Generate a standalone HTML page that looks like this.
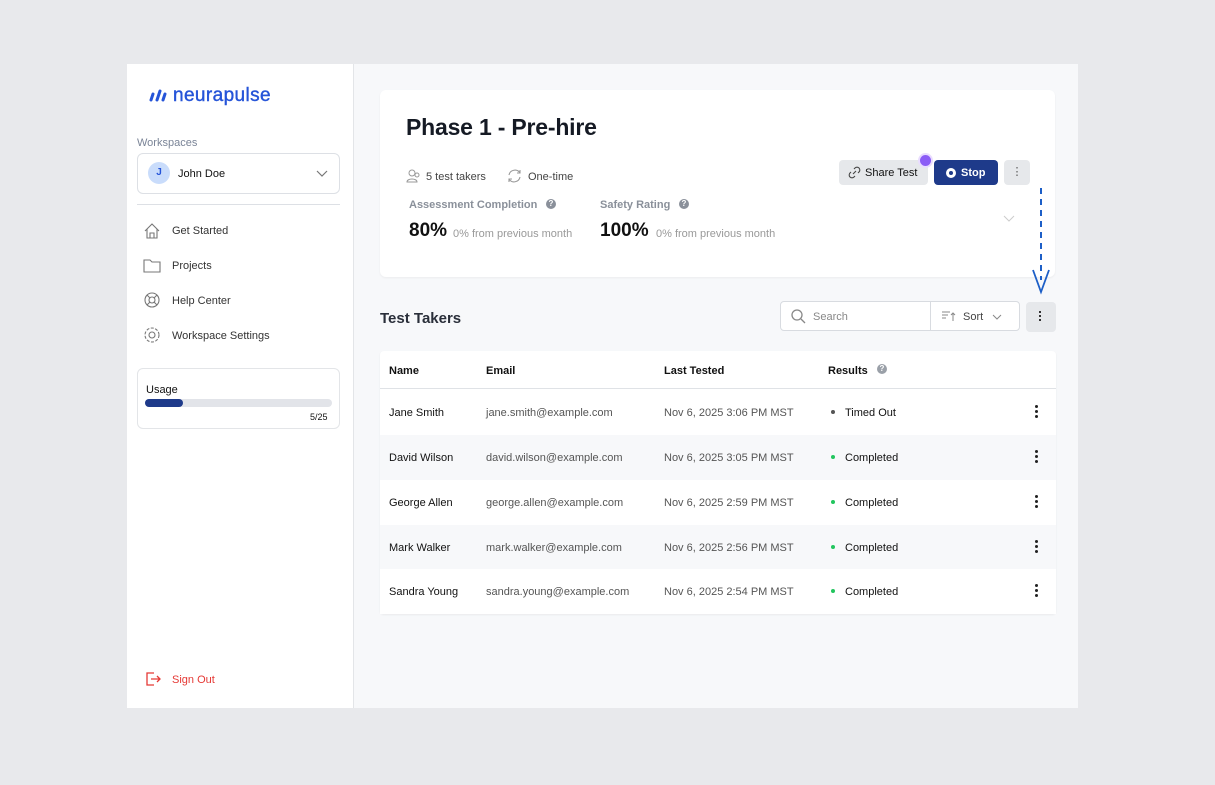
<!DOCTYPE html><html><head><style>
*{box-sizing:border-box;margin:0;padding:0}
body{width:1215px;height:785px;background:#e8e9ec;font-family:"Liberation Sans",sans-serif;position:relative;overflow:hidden;color:#111}
.a{position:absolute}
.t{margin-top:1px}
.frame{left:127px;top:64px;width:951px;height:644px;background:#f7f8fa}
.side{left:127px;top:64px;width:227px;height:644px;background:#fff;border-right:1px solid #e3e5e8}
.nav{font-size:11px;color:#333;margin-top:1px}
.card{left:380px;top:90px;width:675px;height:187px;background:#fff;border-radius:6px;box-shadow:0 1px 2px rgba(0,0,0,.05)}
.tbl{left:380px;top:351px;width:676px;height:263px;background:#fff;border-radius:4px;box-shadow:0 1px 2px rgba(0,0,0,.06)}
.row{position:absolute;left:0;width:676px;height:45px;font-size:11px}
.row span{position:absolute;top:17px}
.dot{display:inline-block;width:4px;height:4px;border-radius:50%;margin-right:10px;vertical-align:2px}
.k{position:absolute;right:18px;top:15px;width:3px}
.k i{display:block;width:3px;height:3px;background:#222;border-radius:50%;margin-bottom:2px}
</style></head><body>
<div class="a frame"></div>
<div class="a side"></div>
<svg class="a" style="left:148px;top:88px" width="20" height="14"><g stroke="#2554d8" stroke-width="3" stroke-linecap="round"><line x1="3" y1="12" x2="5" y2="6"/><line x1="9" y1="12" x2="12" y2="3"/><line x1="15" y1="12" x2="17" y2="6"/></g></svg>
<div class="a" style="left:173px;top:85px;font-size:19px;color:#2554d8;letter-spacing:.4px;-webkit-text-stroke:.4px #2554d8">neurapulse</div>
<div class="a t" style="left:137px;top:136px;font-size:11px;color:#7a8497">Workspaces</div>
<div class="a" style="left:137px;top:153px;width:203px;height:41px;border:1px solid #dde0e5;border-radius:6px;background:#fff"></div>
<div class="a" style="left:148px;top:162px;width:22px;height:22px;border-radius:50%;background:#c9dcfb;color:#2554d8;font-size:10px;font-weight:bold;text-align:center;line-height:22px">J</div>
<div class="a t" style="left:178px;top:167px;font-size:11px">John Doe</div>
<svg class="a" style="left:316px;top:170px" width="12" height="8"><path d="M1 1l5 5 5-5" fill="none" stroke="#777" stroke-width="1.2"/></svg>
<div class="a" style="left:137px;top:204px;width:203px;height:1px;background:#dde0e5"></div>
<svg class="a" style="left:143px;top:222px" width="18" height="130" fill="none" stroke="#777" stroke-width="1.1">
<path d="M2 9l7-7 7 7M4 7v9h10V7M7 16v-5h4v5"/>
<path d="M1 38h6l2 2h8v10H1z"/>
<circle cx="9" cy="78" r="7"/><circle cx="9" cy="78" r="3"/><path d="M4 73l3 3M14 73l-3 3M4 83l3-3M14 83l-3-3"/>
<circle cx="9" cy="113" r="3"/><circle cx="9" cy="113" r="7" stroke-dasharray="3 1.5"/>
</svg>
<div class="a nav" style="left:172px;top:224px">Get Started</div>
<div class="a nav" style="left:172px;top:259px">Projects</div>
<div class="a nav" style="left:172px;top:294px">Help Center</div>
<div class="a nav" style="left:172px;top:329px">Workspace Settings</div>
<div class="a" style="left:137px;top:368px;width:203px;height:61px;border:1px solid #e3e5e8;border-radius:6px;background:#fff"></div>
<div class="a t" style="left:146px;top:383px;font-size:11px">Usage</div>
<div class="a" style="left:145px;top:399px;width:187px;height:8px;border-radius:4px;background:#e2e4e9"></div>
<div class="a" style="left:145px;top:399px;width:38px;height:8px;border-radius:4px;background:#1e3a8a"></div>
<div class="a t" style="left:310px;top:411px;font-size:9px">5/25</div>
<svg class="a" style="left:145px;top:671px" width="16" height="16" fill="none" stroke="#e53935" stroke-width="1.3"><path d="M9 2H2v12h7M6 8h9M12 5l3 3-3 3"/></svg>
<div class="a t" style="left:172px;top:673px;font-size:11px;color:#e53935">Sign Out</div>

<div class="a card"></div>
<div class="a" style="left:406px;top:114px;font-size:23px;font-weight:bold;color:#151a24;letter-spacing:-.2px">Phase 1 - Pre-hire</div>
<svg class="a" style="left:406px;top:169px" width="16" height="14" fill="none" stroke="#999" stroke-width="1"><circle cx="6" cy="4" r="3"/><path d="M1 13c0-4 10-4 10 0z"/><circle cx="11" cy="6" r="2"/></svg>
<div class="a t" style="left:426px;top:170px;font-size:11px;color:#444">5 test takers</div>
<svg class="a" style="left:507px;top:169px" width="15" height="14" fill="none" stroke="#999" stroke-width="1.1"><path d="M2 6a6 6 0 0 1 11-2M13 8a6 6 0 0 1-11 2M13 1v3h-3M2 13v-3h3"/></svg>
<div class="a t" style="left:528px;top:170px;font-size:11px;color:#444">One-time</div>
<div class="a" style="left:839px;top:160px;width:89px;height:25px;background:#e6e8eb;border-radius:4px;font-size:11px;line-height:26px;padding-left:26px">Share Test</div>
<svg class="a" style="left:848px;top:166px" width="13" height="13" fill="none" stroke="#444" stroke-width="1.1"><path d="M5 8l3-3M6 3l1-1a2.5 2.5 0 0 1 4 4l-1 1M7 10l-1 1a2.5 2.5 0 0 1-4-4l1-1"/></svg>
<div class="a" style="left:920px;top:155px;width:11px;height:11px;border-radius:50%;background:#8b5cf6;box-shadow:0 0 0 2px #e9dcff"></div>
<div class="a" style="left:934px;top:160px;width:64px;height:25px;background:#1e3a8a;border-radius:4px;color:#fff;font-size:11px;font-weight:bold;line-height:26px;padding-left:27px">Stop</div>
<div class="a" style="left:946px;top:168px;width:10px;height:10px;border-radius:50%;background:#fff;border:2.5px solid #fff"><div style="width:4px;height:4px;background:#1e3a8a;border-radius:50%;margin:.5px"></div></div>
<div class="a" style="left:1004px;top:160px;width:26px;height:25px;background:#e6e8eb;border-radius:4px;font-size:11px;text-align:center;line-height:25px;color:#555">⋮</div>
<div class="a t" style="left:409px;top:198px;font-size:11px;font-weight:bold;color:#8a909a">Assessment Completion</div>
<div class="a" style="left:546px;top:199px;width:10px;height:10px;border-radius:50%;background:#8a909a;color:#fff;font-size:8px;text-align:center;line-height:10px;font-weight:bold">?</div>
<div class="a t" style="left:600px;top:198px;font-size:11px;font-weight:bold;color:#8a909a">Safety Rating</div>
<div class="a" style="left:679px;top:199px;width:10px;height:10px;border-radius:50%;background:#8a909a;color:#fff;font-size:8px;text-align:center;line-height:10px;font-weight:bold">?</div>
<div class="a" style="left:409px;top:220px;font-size:19px;font-weight:bold">80%</div>
<div class="a" style="left:453px;top:228px;font-size:11px;color:#999">0% from previous month</div>
<div class="a" style="left:600px;top:220px;font-size:19px;font-weight:bold">100%</div>
<div class="a" style="left:656px;top:228px;font-size:11px;color:#999">0% from previous month</div>
<svg class="a" style="left:1003px;top:215px" width="12" height="8"><path d="M1 1l5 5 5-5" fill="none" stroke="#ccc" stroke-width="1"/></svg>
<svg class="a" style="left:1030px;top:186px" width="22" height="114" fill="none" stroke="#1d5fc7" stroke-width="2"><path d="M11 2v92" stroke-dasharray="6 5"/><path d="M3 84l8 22 8-22" stroke-width="1.8"/></svg>

<div class="a" style="left:380px;top:310px;font-size:15px;font-weight:bold;color:#2a2f3a">Test Takers</div>
<div class="a" style="left:780px;top:301px;width:240px;height:30px;border:1px solid #d8dbe0;border-radius:4px;background:#fff"></div>
<div class="a" style="left:930px;top:302px;width:1px;height:28px;background:#d8dbe0"></div>
<svg class="a" style="left:790px;top:308px" width="16" height="16" fill="none" stroke="#888" stroke-width="1.3"><circle cx="7" cy="7" r="5"/><path d="M11 11l4 4"/></svg>
<div class="a t" style="left:813px;top:310px;font-size:11px;color:#888">Search</div>
<svg class="a" style="left:941px;top:310px" width="15" height="12" fill="none" stroke="#888" stroke-width="1"><path d="M1 2h8M1 5h6M1 8h4M12 11V3M10 5l2-2 2 2"/></svg>
<div class="a t" style="left:963px;top:310px;font-size:11px;color:#444">Sort</div>
<svg class="a" style="left:992px;top:314px" width="10" height="6"><path d="M1 1l4 4 4-4" fill="none" stroke="#888"/></svg>
<div class="a" style="left:1026px;top:302px;width:30px;height:30px;background:#e6e8eb;border-radius:4px"></div>
<div class="a" style="left:1039px;top:311px;width:3px"><i style="display:block;width:2px;height:2px;background:#333;margin-bottom:2px"></i><i style="display:block;width:2px;height:2px;background:#333;margin-bottom:2px"></i><i style="display:block;width:2px;height:2px;background:#333"></i></div>

<div class="a tbl">
<div class="row" style="top:0;height:38px;font-weight:bold;border-bottom:1px solid #dfe2e6"><span style="left:9px;top:14px">Name</span><span style="left:106px;top:14px">Email</span><span style="left:284px;top:14px">Last Tested</span><span style="left:448px;top:14px">Results</span><span style="left:497px;top:13px;width:10px;height:10px;border-radius:50%;background:#9aa0a8;color:#fff;font-size:8px;text-align:center;line-height:10px">?</span></div>
<div class="row" style="top:39px;background:#fff"><span style="left:9px">Jane Smith</span><span style="left:106px;color:#555">jane.smith@example.com</span><span style="left:284px;color:#555">Nov 6, 2025 3:06 PM MST</span><span style="left:451px"><i class="dot" style="background:#555"></i>Timed Out</span><div class="k"><i></i><i></i><i></i></div></div>
<div class="row" style="top:84px;background:#f7f8fa"><span style="left:9px">David Wilson</span><span style="left:106px;color:#555">david.wilson@example.com</span><span style="left:284px;color:#555">Nov 6, 2025 3:05 PM MST</span><span style="left:451px"><i class="dot" style="background:#22c55e"></i>Completed</span><div class="k"><i></i><i></i><i></i></div></div>
<div class="row" style="top:129px;background:#fff"><span style="left:9px">George Allen</span><span style="left:106px;color:#555">george.allen@example.com</span><span style="left:284px;color:#555">Nov 6, 2025 2:59 PM MST</span><span style="left:451px"><i class="dot" style="background:#22c55e"></i>Completed</span><div class="k"><i></i><i></i><i></i></div></div>
<div class="row" style="top:174px;background:#f7f8fa"><span style="left:9px">Mark Walker</span><span style="left:106px;color:#555">mark.walker@example.com</span><span style="left:284px;color:#555">Nov 6, 2025 2:56 PM MST</span><span style="left:451px"><i class="dot" style="background:#22c55e"></i>Completed</span><div class="k"><i></i><i></i><i></i></div></div>
<div class="row" style="top:218px;background:#fff"><span style="left:9px">Sandra Young</span><span style="left:106px;color:#555">sandra.young@example.com</span><span style="left:284px;color:#555">Nov 6, 2025 2:54 PM MST</span><span style="left:451px"><i class="dot" style="background:#22c55e"></i>Completed</span><div class="k"><i></i><i></i><i></i></div></div>
</div>
</body></html>
